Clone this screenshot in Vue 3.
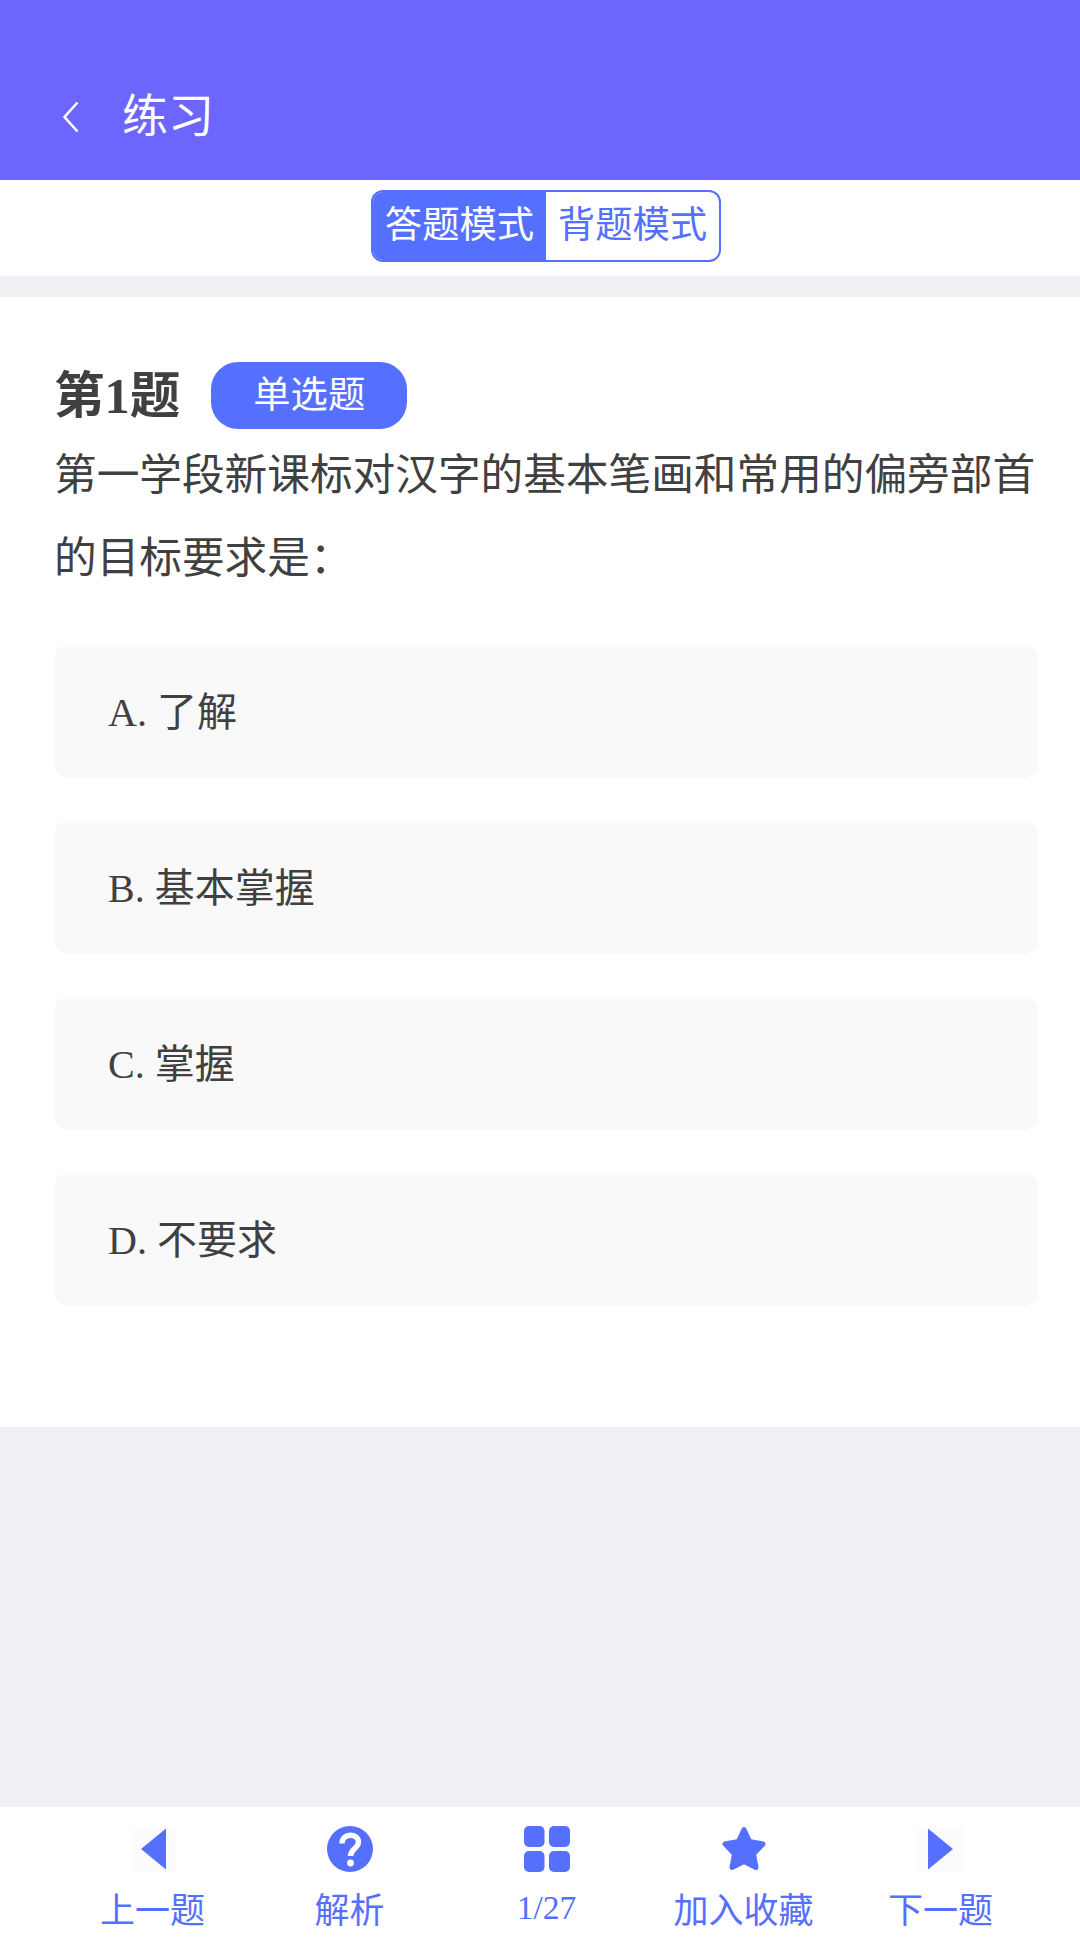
<script setup>
const options = [
  { key: 'A', text: '了解' },
  { key: 'B', text: '基本掌握' },
  { key: 'C', text: '掌握' },
  { key: 'D', text: '不要求' }
]
</script>

<template>
  <div class="page">
    <header class="top">
      <svg class="back" width="20" height="32" viewBox="0 0 20 32"><path d="M17.5 1.5 L4.5 16 L17.5 30.5" fill="none" stroke="#fff" stroke-width="2.6" /></svg>
      <span class="top-title">练习</span>
    </header>
    <div class="mode-row">
      <div class="mode">
        <span class="mode-item on">答题模式</span>
        <span class="mode-item">背题模式</span>
      </div>
    </div>
    <main class="card">
      <div class="q-head">
        <span class="q-no">第1题</span>
        <span class="q-type">单选题</span>
      </div>
      <p class="q-text">第一学段新课标对汉字的基本笔画和常用的偏旁部首的目标要求是：</p>
      <div class="opts">
        <div v-for="o in options" :key="o.key" class="opt">{{ o.key }}. {{ o.text }}</div>
      </div>
    </main>
    <div class="spacer"></div>
    <footer class="bar">
      <div class="tab">
        <svg class="ico" viewBox="0 0 46 46"><rect width="46" height="46" fill="#fcfcff"/><path d="M11 23 L36 2.5 V43.5 Z" fill="#5570ff"/></svg>
        <span>上一题</span>
      </div>
      <div class="tab">
        <svg class="ico" viewBox="0 0 46 46"><circle cx="23" cy="23" r="23" fill="#5570ff"/><path d="M15 17.5 C15 6.5 31.5 7 31.5 16 C31.5 22.5 23.5 22.5 23.5 30" fill="none" stroke="#fff" stroke-width="5.4"/><circle cx="23.5" cy="37" r="3.4" fill="#fff"/></svg>
        <span>解析</span>
      </div>
      <div class="tab count">
        <svg class="ico" viewBox="0 0 46 46"><rect x="0" y="0" width="20.5" height="21" rx="5" fill="#5570ff"/><rect x="25" y="0" width="21" height="21" rx="5" fill="#5570ff"/><rect x="0" y="25" width="20.5" height="21" rx="5" fill="#5570ff"/><rect x="25" y="25" width="21" height="21" rx="5" fill="#5570ff"/></svg>
        <span>1/27</span>
      </div>
      <div class="tab">
        <svg class="ico" viewBox="0 0 46 46"><path d="M23 3.5 L28.5 15.5 L42 18 L32.5 28 L35 41.5 L23 35.5 L11 41.5 L13.5 28 L4 18 L17.5 15.5 Z" fill="#5570ff" stroke="#5570ff" stroke-width="5" stroke-linejoin="round"/></svg>
        <span>加入收藏</span>
      </div>
      <div class="tab">
        <svg class="ico" viewBox="0 0 46 46"><rect width="46" height="46" fill="#fcfcff"/><path d="M35 23 L10 2.5 V43.5 Z" fill="#5570ff"/></svg>
        <span>下一题</span>
      </div>
    </footer>
  </div>
</template>

<style>
body { margin: 0; }
</style>

<style scoped>
.page {
  width: 1080px;
  height: 1945px;
  display: flex;
  flex-direction: column;
  background: #f0f0f5;
  font-family: "Liberation Serif", "Noto Sans CJK SC", serif;
  color: #404040;
  overflow: hidden;
}
.top {
  height: 180px;
  box-sizing: border-box;
  background: #6c66ff;
  color: #fff;
  display: flex;
  align-items: center;
  padding: 54px 0 0 60px;
}
.back { flex: none; }
.top-title {
  margin-left: 42px;
  font-size: 46px;
  line-height: 60px;
}
.mode-row {
  height: 96px;
  background: #fff;
  display: flex;
  justify-content: center;
  padding: 10px 0 0 12px;
  box-sizing: border-box;
}
.mode {
  width: 350px;
  height: 72px;
  box-sizing: border-box;
  border: 2px solid #5570ff;
  border-radius: 12px;
  display: flex;
  overflow: hidden;
}
.mode-item {
  flex: 1;
  text-align: center;
  font-size: 37.33px;
  line-height: 68px;
  color: #5570ff;
}
.mode-item.on {
  background: #5570ff;
  color: #fff;
}
.card {
  margin-top: 21px;
  height: 1130px;
  box-sizing: border-box;
  background: #fff;
  padding: 65px 42px 0 54px;
}
.q-head {
  display: flex;
  align-items: center;
  height: 67px;
}
.q-no {
  font-size: 50.5px;
  font-weight: 700;
  line-height: 70px;
}
.q-type {
  margin-left: 31px;
  width: 196px;
  height: 67px;
  border-radius: 27px;
  background: #5570ff;
  color: #fff;
  text-align: center;
  font-size: 37.33px;
  line-height: 68px;
}
.q-text {
  margin: 0;
  font-size: 42.67px;
  line-height: 83px;
  margin-top: 5px;
}
.opts {
  margin-top: 45px;
  display: flex;
  flex-direction: column;
  gap: 43px;
}
.opt {
  height: 133px;
  box-sizing: border-box;
  padding-left: 54px;
  border-radius: 14px;
  background: #f9f9f9;
  font-size: 40px;
  line-height: 135px;
}
.spacer { flex: 1; }
.bar {
  height: 138px;
  box-sizing: border-box;
  background: #fff;
  display: flex;
  padding: 19px 41px 0 54px;
}
.tab {
  flex: 1;
  display: flex;
  flex-direction: column;
  align-items: center;
  color: #5570ff;
  font-size: 35px;
  line-height: 50px;
  gap: 15px;
}
.ico {
  width: 46px;
  height: 46px;
  flex: none;
}
.count {
  font-size: 33.6px;
  gap: 11px;
}
</style>
